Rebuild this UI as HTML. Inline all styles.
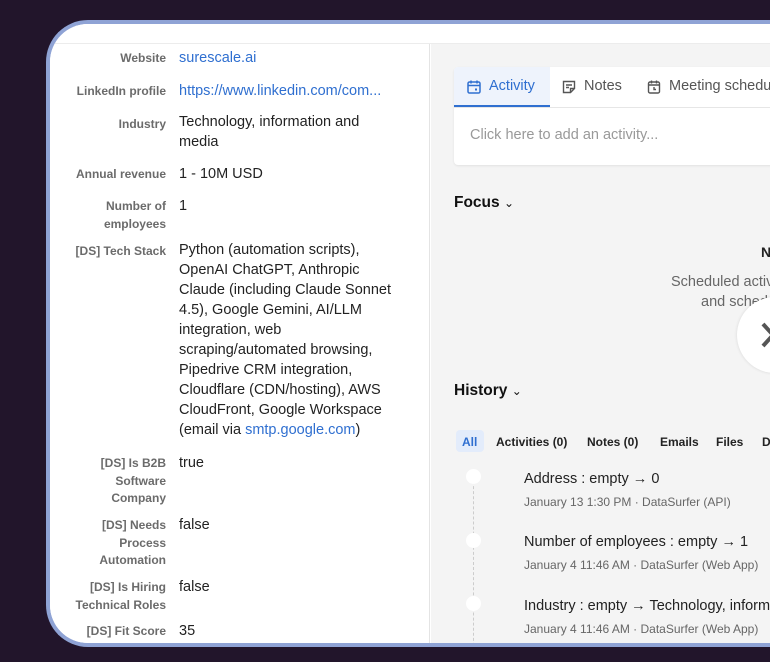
<!DOCTYPE html>
<html><head><meta charset="utf-8"><style>
*{margin:0;padding:0;box-sizing:border-box}
html,body{width:770px;height:662px;overflow:hidden}
body{background:#22152b;font-family:"Liberation Sans",sans-serif;position:relative}
#frame{position:absolute;left:46px;top:20px;width:724px;height:627px;border:4px solid #8fa3d5;border-right:none;border-radius:42px 0 0 42px;overflow:hidden;background:#fff}
#top{position:absolute;left:0;top:0;right:0;height:20px;background:#fff;border-bottom:1px solid #ececec}
#left{position:absolute;left:0;top:20px;width:380px;bottom:0;background:#fff;border-right:1px solid #e4e4e4}
#right{position:absolute;left:381px;top:20px;right:0;bottom:0;background:#f4f4f4;overflow:hidden}
.l{position:absolute;right:0;width:200px;text-align:right;font-size:12px;font-weight:bold;color:#6b6b6b;line-height:17.5px}
.lw{position:absolute;width:116px;left:0;}
.v{position:absolute;left:129px;font-size:14.5px;color:#222;line-height:20px;width:212px}
a{color:#2f6fd0;text-decoration:none}
.abs{position:absolute}
</style></head><body>
<div id="frame">
<div id="top"></div>
<div id="left">
 <div class="lw" style="top:6px"><div class="l" style="top:0">Website</div></div>
 <div class="v" style="top:4px"><a>surescale.ai</a></div>
 <div class="lw" style="top:39px"><div class="l">LinkedIn profile</div></div>
 <div class="v" style="top:37px;white-space:nowrap"><a>https://www.linkedin.com/com...</a></div>
 <div class="lw" style="top:72px"><div class="l">Industry</div></div>
 <div class="v" style="top:68px;width:200px">Technology, information and media</div>
 <div class="lw" style="top:122px"><div class="l">Annual revenue</div></div>
 <div class="v" style="top:120px">1 - 10M USD</div>
 <div class="lw" style="top:154px"><div class="l" style="width:80px">Number of employees</div></div>
 <div class="v" style="top:152px">1</div>
 <div class="lw" style="top:199px"><div class="l">[DS] Tech Stack</div></div>
 <div class="v" style="top:196px">Python (automation scripts), OpenAI ChatGPT, Anthropic Claude (including Claude Sonnet 4.5), Google Gemini, AI/LLM integration, web scraping/automated browsing, Pipedrive CRM integration, Cloudflare (CDN/hosting), AWS CloudFront, Google Workspace (email via <a>smtp.google.com</a>)</div>
 <div class="lw" style="top:411px"><div class="l" style="width:90px">[DS] Is B2B Software Company</div></div>
 <div class="v" style="top:409px">true</div>
 <div class="lw" style="top:473px"><div class="l" style="width:90px">[DS] Needs Process Automation</div></div>
 <div class="v" style="top:471px">false</div>
 <div class="lw" style="top:535px"><div class="l" style="width:100px">[DS] Is Hiring Technical Roles</div></div>
 <div class="v" style="top:533px">false</div>
 <div class="lw" style="top:579px"><div class="l">[DS] Fit Score</div></div>
 <div class="v" style="top:577px">35</div>
</div>
<div id="right">
 <div class="abs" style="left:23px;top:23px;width:400px;height:98px;background:#fff;border-radius:4px;box-shadow:0 1px 2px rgba(0,0,0,.08)">
  <div class="abs" style="left:0;top:0;width:96px;height:40px;background:#eef3fc;border-bottom:2px solid #2f6fd0;border-radius:4px 0 0 0"></div>
  <div class="abs" style="left:0;top:40px;width:400px;height:1px;background:#e6e6e6"></div>
  <svg class="abs" style="left:12px;top:12px" width="16" height="16" viewBox="0 0 16 16" fill="none" stroke="#2f6fd0" stroke-width="1.5"><rect x="2" y="3" width="12" height="11" rx="1.5"/><path d="M2 6.5h12M5 1.5v3M11 1.5v3"/><rect x="9" y="9.5" width="2" height="2" fill="#2f6fd0" stroke="none"/></svg>
  <div class="abs" style="left:35px;top:11px;font-size:14.5px;color:#2f6fd0">Activity</div>
  <svg class="abs" style="left:107px;top:12px" width="16" height="16" viewBox="0 0 16 16" fill="none" stroke="#555" stroke-width="1.4"><path d="M2.5 2.5h11v7l-4 4h-7z M9.5 13.5v-4h4 M5 6h6M5 8.5h3"/></svg>
  <div class="abs" style="left:130px;top:11px;font-size:14.5px;color:#555">Notes</div>
  <svg class="abs" style="left:192px;top:12px" width="16" height="16" viewBox="0 0 16 16" fill="none" stroke="#555" stroke-width="1.4"><rect x="2.5" y="3" width="11" height="11" rx="1.5"/><path d="M2.5 6h11M5.5 1.5v3M10.5 1.5v3M8 8v2.5h2"/></svg>
  <div class="abs" style="left:215px;top:11px;font-size:14.5px;color:#555;white-space:nowrap">Meeting scheduler</div>
  <div class="abs" style="left:16px;top:60px;font-size:14.5px;color:#999">Click here to add an activity...</div>
 </div>
 <div class="abs" style="left:23px;top:150px;font-size:15.5px;font-weight:bold;color:#111">Focus <span style="font-weight:normal;font-size:12px">&#8964;</span></div>
 <div class="abs" style="left:330px;top:200px;font-size:14px;color:#222;font-weight:bold">N</div>
 <div class="abs" style="left:240px;top:230px;font-size:14.5px;color:#666;white-space:nowrap">Scheduled activities</div>
 <div class="abs" style="left:270px;top:250px;font-size:14.5px;color:#666;white-space:nowrap">and scheduled</div>
 <div class="abs" style="left:306px;top:253px;width:76px;height:76px;border-radius:50%;background:#fff;box-shadow:0 0 3px rgba(0,0,0,.12)"></div>
 <svg class="abs" style="left:328px;top:276px" width="20" height="30" viewBox="0 0 20 30"><path d="M4 4l10 11L4 26" stroke="#555" stroke-width="4" fill="none"/></svg>
 <div class="abs" style="left:23px;top:338px;font-size:15.5px;font-weight:bold;color:#111">History <span style="font-weight:normal;font-size:12px">&#8964;</span></div>
 <div class="abs" style="left:25px;top:386px;width:28px;height:22px;background:#e3ecfb;border-radius:4px"></div>
 <div class="abs" style="left:31px;top:391px;font-size:12px;font-weight:bold;color:#2f6fd0">All</div>
 <div class="abs" style="left:65px;top:391px;font-size:12px;font-weight:bold;color:#222;white-space:nowrap">Activities (0)</div>
 <div class="abs" style="left:156px;top:391px;font-size:12px;font-weight:bold;color:#222;white-space:nowrap">Notes (0)</div>
 <div class="abs" style="left:229px;top:391px;font-size:12px;font-weight:bold;color:#222;white-space:nowrap">Emails</div>
 <div class="abs" style="left:285px;top:391px;font-size:12px;font-weight:bold;color:#222;white-space:nowrap">Files</div>
 <div class="abs" style="left:331px;top:391px;font-size:12px;font-weight:bold;color:#222;white-space:nowrap">Documents</div>
 <div class="abs" style="left:42px;top:432px;width:0;height:180px;border-left:1px dashed #ccc"></div>
 <div class="abs" style="left:35px;top:425px;width:15px;height:15px;border-radius:50%;background:#fff"></div>
 <div class="abs" style="left:35px;top:489px;width:15px;height:15px;border-radius:50%;background:#fff"></div>
 <div class="abs" style="left:35px;top:552px;width:15px;height:15px;border-radius:50%;background:#fff"></div>
 <div class="abs" style="left:93px;top:427px;font-size:14.5px;color:#222;white-space:nowrap">Address : empty &rarr; 0</div>
 <div class="abs" style="left:93px;top:451px;font-size:12px;color:#666;white-space:nowrap">January 13 1:30 PM · DataSurfer (API)</div>
 <div class="abs" style="left:93px;top:490px;font-size:14.5px;color:#222;white-space:nowrap">Number of employees : empty &rarr; 1</div>
 <div class="abs" style="left:93px;top:514px;font-size:12px;color:#666;white-space:nowrap">January 4 11:46 AM · DataSurfer (Web App)</div>
 <div class="abs" style="left:93px;top:554px;font-size:14.5px;color:#222;white-space:nowrap">Industry : empty &rarr; Technology, information and media</div>
 <div class="abs" style="left:93px;top:578px;font-size:12px;color:#666;white-space:nowrap">January 4 11:46 AM · DataSurfer (Web App)</div>
</div>
</div>
</body></html>
